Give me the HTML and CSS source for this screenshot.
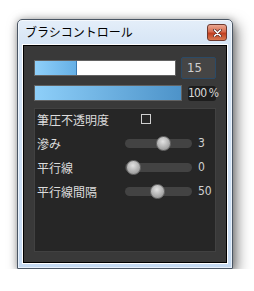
FILE: index.html
```html
<!DOCTYPE html>
<html>
<head>
    <meta charset="utf-8">
    <title>ブラシコントロール</title>
    <link rel="stylesheet" href="styles.css">
</head>
<body>
    <div class="window">
        <div class="titlebar">
            <span class="title">ブラシコントロール</span>
            <div class="close">
                <svg width="9" height="8" viewBox="0 0 9 8">
                    <path d="M1.5 1 L7.5 7 M7.5 1 L1.5 7" stroke="#5a2a20" stroke-width="3" stroke-linecap="round"/>
                    <path d="M1.5 1 L7.5 7 M7.5 1 L1.5 7" stroke="#fff" stroke-width="1.6" stroke-linecap="round"/>
                </svg>
            </div>
        </div>

        <div class="client">
            <div class="size-row">
                <div class="bar bar-size"><div class="fill" style="width: 30%"></div></div>
                <div class="num-box">15</div>
            </div>

            <div class="opacity-row">
                <div class="bar bar-opacity"><div class="fill full" style="width: 100%"></div></div>
                <div class="pct">100 %</div>
            </div>

            <div class="panel">
                <div class="row">
                    <span class="label">筆圧不透明度</span>
                    <span class="checkbox"></span>
                </div>
                <div class="row">
                    <span class="label">滲み</span>
                    <div class="track"><div class="thumb" style="left: 31px"></div></div>
                    <span class="value">3</span>
                </div>
                <div class="row">
                    <span class="label">平行線</span>
                    <div class="track"><div class="thumb" style="left: 1px"></div></div>
                    <span class="value">0</span>
                </div>
                <div class="row">
                    <span class="label">平行線間隔</span>
                    <div class="track"><div class="thumb" style="left: 25px"></div></div>
                    <span class="value">50</span>
                </div>
            </div>
        </div>
    </div>
</body>
</html>
```

FILE: styles.css
```css
body {
    margin: 0;
    background: #fff;
    font-family: "Noto Sans CJK JP", sans-serif;
}

.window {
    margin: 19px 0 0 17px;
    width: 216px;
    height: 250px;
    box-sizing: border-box;
    border: 1px solid #4a5664;
    border-radius: 5px 5px 0 0;
    background: linear-gradient(#e4eef9, #d6e5f5 24px, #c5daf2);
    padding: 0 4px 4px;
    box-shadow: 4px 5px 14px rgba(0,0,0,0.5), 0 0 7px rgba(0,0,0,0.25), inset 0 0 0 1px rgba(255,255,255,0.6);
    display: flex;
    flex-direction: column;
}

.titlebar {
    height: 24px;
    display: flex;
    justify-content: space-between;
    align-items: flex-start;
    padding-left: 3px;
}

.title {
    font-size: 12px;
    line-height: 24px;
    color: #000;
}

.close {
    margin: 4px 1px 0 0;
    width: 20px;
    height: 17px;
    box-sizing: border-box;
    border: 1px solid #6e3a30;
    border-radius: 3px;
    background: linear-gradient(#eaa893, #d86c4f 45%, #c13f20 55%, #d97a52);
    display: flex;
    align-items: center;
    justify-content: center;
}

.client {
    flex: 1;
    border: 1px solid #fff;
    box-shadow: inset 0 0 0 1px #000;
    background: #393939;
    padding: 12px 11px 11px;
    display: flex;
    flex-direction: column;
}

.size-row {
    height: 22px;
    display: flex;
    align-items: center;
    gap: 5px;
}

.opacity-row {
    height: 16px;
    margin-top: 6px;
    display: flex;
    align-items: center;
    gap: 6px;
}

.bar {
    height: 16px;
    box-sizing: border-box;
    border: 1px solid #626262;
    background: #fff;
    display: flex;
}

.bar-size {
    width: 142px;
}

.bar-opacity {
    width: 148px;
}

.fill {
    height: 100%;
    box-sizing: border-box;
    background: linear-gradient(90deg, #8fd0fa, #66b0e6);
    border-right: 1px solid #3a79b2;
}

.fill.full {
    border-right: none;
    background: linear-gradient(90deg, #8ecff9, #4d93c9);
}

.num-box {
    width: 35px;
    height: 22px;
    box-sizing: border-box;
    border: 1px solid #2b4a66;
    border-radius: 2px;
    background: #454545;
    color: #cfcfcf;
    font-family: "DejaVu Sans Condensed", "Liberation Sans", sans-serif;
    font-size: 13px;
    line-height: 20px;
    padding-left: 5px;
}

.pct {
    width: 28px;
    height: 15px;
    border-radius: 3px;
    background: #1d1d1d;
    color: #d8d8d8;
    font-family: "DejaVu Sans Condensed", "Liberation Sans", sans-serif;
    font-size: 12px;
    letter-spacing: -0.8px;
    line-height: 15px;
    text-align: right;
    white-space: nowrap;
}

.panel {
    margin-top: 7px;
    height: 144px;
    box-sizing: border-box;
    border: 1px solid #414141;
    background: #262626;
    padding-left: 2px;
}

.row {
    height: 24px;
    box-sizing: border-box;
    padding-bottom: 4px;
    display: flex;
    align-items: center;
}

.label {
    width: 88px;
    font-size: 12px;
    color: #dcdcdc;
}

.checkbox {
    margin-left: 16px;
    width: 10px;
    height: 10px;
    box-sizing: border-box;
    border: 1px solid #d0d0d0;
}

.track {
    position: relative;
    width: 67px;
    height: 9px;
    border-radius: 5px;
    background: #434343;
}

.thumb {
    position: absolute;
    top: -3px;
    width: 15px;
    height: 15px;
    box-sizing: border-box;
    border-radius: 50%;
    border: 1px solid #6a6a6a;
    background: radial-gradient(circle at 45% 35%, #e2e2e2, #b4b4b4 50%, #858585);
}

.value {
    margin-left: 6px;
    font-family: "DejaVu Sans Condensed", "Liberation Sans", sans-serif;
    font-size: 12px;
    color: #d0d0d0;
}
```
